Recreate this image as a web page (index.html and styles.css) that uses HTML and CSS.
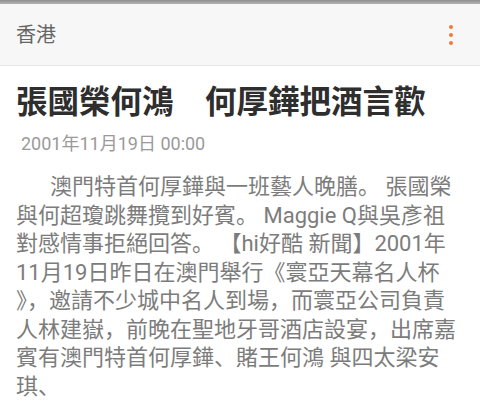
FILE: index.html
```html
<!DOCTYPE html>
<html lang="zh-Hans">
<head>
<meta charset="utf-8">
<link rel="stylesheet" href="styles.css">
</head>
<body>
<div class="topstrip"></div>
<header class="appbar">
  <span class="appbar-title">香港</span>
  <span class="menu" aria-label="menu"><i></i><i></i><i></i></span>
</header>
<main class="article">
  <h1 class="headline">張國榮何鴻　何厚鏵把酒言歡</h1>
  <div class="date">2001年11月19日 00:00</div>
  <p class="body"><span class="first">澳門特首何厚鏵與一班藝人晚膳。 張國榮</span><br>與何超瓊跳舞攬到好賓。 Maggie Q與吳彥祖<br>對感情事拒絕回答。 【hi好酷 新聞】2001年<br>11月19日昨日在澳門舉行《寰亞天幕名人杯<br>》，邀請不少城中名人到場，而寰亞公司負責<br>人林建嶽，前晚在聖地牙哥酒店設宴，出席嘉<br>賓有澳門特首何厚鏵、賭王何鴻 與四太梁安<br>琪、</p>
</main>
</body>
</html>
```
FILE: styles.css
```css
html, body {
  margin: 0;
  padding: 0;
  background: #ffffff;
}
body {
  width: 480px;
  height: 409px;
  overflow: hidden;
  font-family: Roboto, "Noto Sans CJK SC", "Noto Sans CJK TC", sans-serif;
}
.topstrip {
  height: 4px;
  background: linear-gradient(#8f8f8f, #b4b4b4);
}
.appbar {
  height: 62px;
  box-sizing: border-box;
  background: #f7f7f7;
  border-bottom: 1px solid #e8e8e8;
  display: flex;
  align-items: center;
  justify-content: space-between;
  padding: 0 27px 0 16px;
}
.appbar-title {
  font-size: 20px;
  color: #666666;
  line-height: 24px;
}
.menu {
  display: flex;
  flex-direction: column;
  gap: 4px;
}
.menu i {
  display: block;
  width: 4px;
  height: 4px;
  border-radius: 50%;
  background: #f07a3a;
}
.article {
  padding: 0 16px;
}
.headline {
  margin: 18px 0 0;
  font-size: 31.5px;
  line-height: 38px;
  font-weight: bold;
  color: #2e2e2e;
  white-space: nowrap;
}
.date {
  margin: 11px 0 0 5px;
  font-size: 18px;
  line-height: 22px;
  color: #9a9a9a;
}
.body {
  margin: 18px 0 0;
  font-size: 22px;
  line-height: 28.5px;
  color: #7c7c7c;
  white-space: nowrap;
}
.first {
  padding-left: 34px;
}
```
